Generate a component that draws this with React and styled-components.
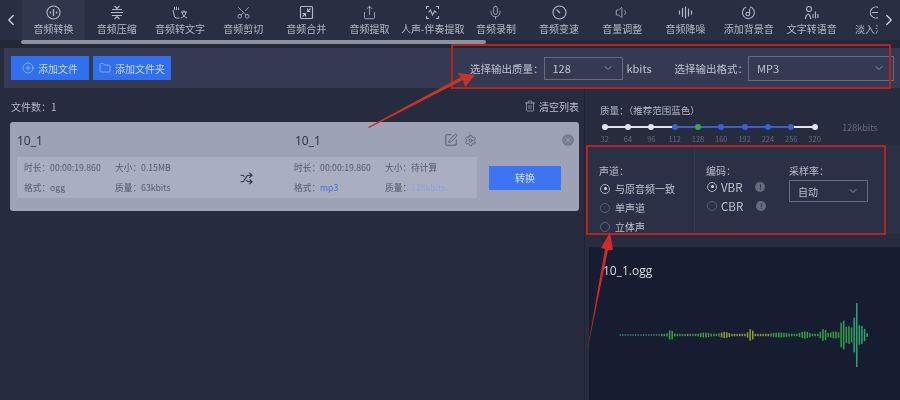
import styled, { createGlobalStyle } from 'styled-components';
import {
  ChevronLeft, ChevronRight, ChevronDown, Scissors, Share, Mic, Volume1,
  CirclePlus, Folder, Trash2, SquarePen, Settings, Shuffle, X,
} from 'lucide-react';

const Global = createGlobalStyle`
  html, body { margin: 0; padding: 0; background: #262c3e; }
  * { box-sizing: border-box; }
  body { font-family: "Noto Sans CJK SC", "Noto Sans", sans-serif; }
`;

const Page = styled.div`
  position: relative;
  width: 900px;
  height: 400px;
  overflow: hidden;
  background: #262c3e;
  display: flex;
  flex-direction: column;
  filter: blur(0.45px);
`;

const Nav = styled.div`
  height: 40px;
  display: flex;
  align-items: stretch;
  background: #292f42;
  flex: none;
`;

const NavArrow = styled.div`
  width: 22px;
  flex: none;
  display: flex;
  align-items: center;
  justify-content: center;
  color: #d8dbe4;
  background: #292f42;
  z-index: 1;
`;

const NavList = styled.div`
  flex: 1;
  display: flex;
  overflow: hidden;
`;

const NavItem = styled.div`
  width: 63.2px;
  flex: none;
  display: flex;
  flex-direction: column;
  align-items: center;
  padding-top: 5px;
  gap: 1px;
  color: #b4b8c6;
  font-size: 10px;
  line-height: 15px;
  white-space: nowrap;
  background: ${({ $active }) => ($active ? '#30374c' : 'transparent')};
  svg { height: 15px; flex: none; }
`;

const ScissorsUp = styled(Scissors)`
  transform: rotate(-90deg);
`;

const ScrollTrack = styled.div`
  height: 8px;
  flex: none;
  padding-left: 21px;
  background: #232839;
`;

const ScrollThumb = styled.div`
  width: 465px;
  height: 4px;
  border-radius: 2px;
  background: #8d91a3;
`;

const Toolbar = styled.div`
  height: 40px;
  flex: none;
  margin-left: 4px;
  padding-left: 7px;
  display: flex;
  align-items: center;
  background: #333a52;
`;

const BlueButton = styled.div`
  width: 78px;
  height: 24px;
  margin-right: 4px;
  display: flex;
  align-items: center;
  justify-content: center;
  gap: 4px;
  background: #3070ee;
  color: #c9d7f6;
  font-size: 10px;
  flex: none;
`;

const OutputControls = styled.div`
  margin-left: auto;
  display: flex;
  align-items: center;
  color: #bfc3cf;
  font-size: 10.5px;
  width: 430px;
  white-space: nowrap;
`;

const UnitLabel = styled.span`
  font-size: 11px;
  margin-right: 23px;
`;

const SelectBox = styled.div`
  width: ${({ $w }) => $w}px;
  height: ${({ $h }) => $h || 23}px;
  flex: none;
  display: flex;
  align-items: center;
  justify-content: space-between;
  padding: 0 8px;
  border: 1px solid #656c80;
  color: #bfc3cf;
  font-size: ${({ $small }) => ($small ? '10px' : '11px')};
  margin: ${({ $m }) => $m || '0'};
  svg { color: #8d93a5; }
`;

const Main = styled.div`
  flex: 1;
  min-height: 0;
  display: flex;
`;

const LeftPanel = styled.div`
  width: 585px;
  flex: none;
  padding: 0 5px 0 10px;
  border-right: 1px solid #1e2333;
`;

const ListHead = styled.div`
  height: 34px;
  display: flex;
  align-items: center;
  justify-content: space-between;
  font-size: 10px;
  color: #b9bcc8;
  padding: 2px 0 0 1px;
`;

const ClearBtn = styled.div`
  display: flex;
  align-items: center;
  gap: 3px;
  font-size: 10px;
  color: #bfc3cf;
`;

const Card = styled.div`
  position: relative;
  width: 569px;
  height: 89px;
  background: #9da2b6;
  border-radius: 3px;
  padding: 4px 7px 0;
`;

const CardTop = styled.div`
  height: 28px;
  margin-bottom: 3px;
  display: flex;
  align-items: center;
  font-family: "Noto Sans", sans-serif;
  font-size: 12px;
  color: #30354a;
`;

const TopName = styled.div`
  width: ${({ $w }) => $w}px;
  flex: none;
`;

const TopIcons = styled.div`
  display: flex;
  align-items: center;
  gap: 6px;
  color: #3c4156;
`;

const CloseDot = styled.div`
  position: absolute;
  top: 12px;
  right: 5px;
  width: 12px;
  height: 12px;
  border-radius: 50%;
  background: #777c90;
  color: #a7abbd;
  display: flex;
  align-items: center;
  justify-content: center;
`;

const CardBody = styled.div`
  display: flex;
  align-items: center;
`;

const InfoBox = styled.div`
  width: 460px;
  height: 41px;
  flex: none;
  background: #a9aec1;
  display: flex;
  align-items: center;
  padding-left: 7px;
`;

const InfoGrid = styled.div`
  width: 180px;
  flex: none;
  display: grid;
  grid-template-columns: 91px 1fr;
  row-gap: 4px;
  padding-top: 1px;
  font-size: 8.7px;
  line-height: 16px;
  color: #555a6d;
  white-space: nowrap;
`;

const Highlight = styled.span`
  color: ${({ $pale }) => ($pale ? '#8ea2de' : '#4c70d8')};
`;

const ShuffleSlot = styled.div`
  width: 90px;
  flex: none;
  display: flex;
  justify-content: center;
  color: #2b3044;
  padding: 1px 6px 0 0;
`;

const ConvertBtn = styled.div`
  width: 72px;
  height: 24px;
  margin-left: 12px;
  background: #3c74f4;
  color: #d7e2fb;
  font-size: 10px;
  display: flex;
  align-items: center;
  justify-content: center;
`;

const RightPanel = styled.div`
  flex: 1;
  min-width: 0;
  display: flex;
  flex-direction: column;
  margin-left: 4px;
`;

const Quality = styled.div`
  height: 58px;
  flex: none;
  padding: 15px 0 0 11px;
  color: #b5b9c6;
  font-size: 9.5px;
`;

const QualityLabel = styled.div`
  line-height: 15px;
`;

const SliderRow = styled.div`
  display: flex;
  margin-top: 4px;
`;

const Ticks = styled.div`
  position: relative;
  display: flex;
  width: 233.3px;
  margin-left: -7px;
`;

const TrackLine = styled.div`
  position: absolute;
  top: 4px;
  height: 2px;
  left: ${({ $l }) => $l}px;
  width: ${({ $w }) => $w}px;
  background: ${({ $blue }) => ($blue ? '#3a5fc9' : '#e2e4ea')};
`;

const Tick = styled.div`
  position: relative;
  width: 23.33px;
  flex: none;
  display: flex;
  flex-direction: column;
  align-items: center;
  gap: 4px;
  font-size: 7.5px;
  line-height: 10px;
  color: #666c80;
`;

const Dot = styled.div`
  width: 6px;
  height: 6px;
  margin-top: 2px;
  border-radius: 50%;
  background: ${({ $c }) => $c};
`;

const QualityValue = styled.div`
  margin-left: 16px;
  font-size: 9px;
  color: #666c80;
  line-height: 11px;
`;

const SettingsRow = styled.div`
  height: 88px;
  flex: none;
  display: flex;
  background: #2a3046;
  font-size: 10px;
  color: #c0c4d0;
  margin-bottom: 13px;
  overflow: hidden;
`;

const SettingCol = styled.div`
  width: ${({ $w }) => $w}px;
  flex: none;
  padding: 17px 0 0 ${({ $left }) => $left}px;
  border-right: ${({ $line }) => ($line ? '1px solid #333a50' : 'none')};
`;

const ColTitle = styled.div`
  font-size: 10px;
  line-height: 16px;
  margin-bottom: ${({ $tight }) => ($tight ? '-2px' : '0')};
  color: #b9bdca;
`;

const RadioRow = styled.div`
  height: 19px;
  display: flex;
  align-items: center;
  gap: ${({ $latin }) => ($latin ? '4px' : '5px')};
  font-size: ${({ $latin }) => ($latin ? '11.5px' : '10px')};
  white-space: nowrap;
`;

const Radio = styled.div`
  width: 10px;
  height: 10px;
  margin-left: 1px;
  flex: none;
  border-radius: 50%;
  border: 1px solid ${({ $on }) => ($on ? '#aeb2c0' : '#596075')};
  display: flex;
  align-items: center;
  justify-content: center;
  &::after {
    content: '';
    width: 3px;
    height: 3px;
    border-radius: 50%;
    background: ${({ $on }) => ($on ? '#d8dbe3' : 'transparent')};
  }
`;

const InfoDot = styled.div`
  width: 10px;
  height: 10px;
  margin-left: 9px;
  border-radius: 50%;
  background: #666c80;
  color: #2a3046;
  font-size: 7px;
  font-weight: 700;
  line-height: 10px;
  text-align: center;
`;

const WavePanel = styled.div`
  flex: 1;
  min-height: 0;
  background: #171d30;
  padding: 16px 0 0 14px;
`;

const WaveName = styled.div`
  font-family: "Open Sans", "Noto Sans", sans-serif;
  font-size: 12px;
  line-height: 16px;
  color: #d9dbe2;
`;

const WaveSvg = styled.svg`
  display: block;
  margin: 21px 0 0 16px;
`;

const Overlay = styled.svg`
  position: absolute;
  left: 0;
  top: 0;
  pointer-events: none;
`;

function NavSvg({ children, sw = 1.1, w = 15 }) {
  return (
    <svg width={w} height="15" viewBox={`0 0 ${w} 15`} fill="none" stroke="currentColor" strokeWidth={sw}>
      {children}
    </svg>
  );
}

const iconProps = { size: 15, strokeWidth: 1.3 };

const tools = [
  {
    name: '音频转换',
    active: true,
    icon: (
      <NavSvg>
        <circle cx="7.5" cy="7.5" r="6.5" />
        <path d="M4.5 6.5v2M7.5 4v7M10.5 6.5v2" strokeWidth="1.3" />
      </NavSvg>
    ),
  },
  {
    name: '音频压缩',
    icon: (
      <NavSvg w={16}>
        <path d="M2 7.5h12M3 4.5h10M3 10.5h10M5.5 1L8 3.5 10.5 1M5.5 14L8 11.5l2.5 2.5" />
      </NavSvg>
    ),
  },
  {
    name: '音频转文字',
    icon: (
      <NavSvg w={16} sw={1}>
        <path d="M1 5l1.5 6.5c.5 1.5 3 2 5 1.5M2.5 5V2M4.5 5V1.5M6.5 5V2.5M9 7h6M12 5v2M10 7c.5 3 2.5 5 5 6M14 7c-.5 3-2.5 5-5 6" />
      </NavSvg>
    ),
  },
  { name: '音频剪切', icon: <ScissorsUp {...iconProps} /> },
  {
    name: '音频合并',
    icon: (
      <NavSvg>
        <rect x="1.5" y="1.5" width="12" height="12" rx="1" />
        <path d="M3.5 11.5l3-3M3.5 8.5h3v3M11.5 3.5l-3 3M8.5 3.5v3h3" />
      </NavSvg>
    ),
  },
  { name: '音频提取', icon: <Share {...iconProps} /> },
  {
    name: '人声-伴奏提取',
    icon: (
      <NavSvg>
        <path d="M1.5 4V1.5H4M11 1.5h2.5V4M1.5 11v2.5H4M11 13.5h2.5V11" />
        <path d="M3.5 7.5l2-2.5 2 5 2-4 2 1.5" />
      </NavSvg>
    ),
  },
  { name: '音频录制', icon: <Mic {...iconProps} /> },
  {
    name: '音频变速',
    icon: (
      <NavSvg>
        <circle cx="7.5" cy="7.5" r="6.5" />
        <path d="M4.5 4.5L8 8" strokeWidth="1.3" />
      </NavSvg>
    ),
  },
  { name: '音量调整', icon: <Volume1 {...iconProps} /> },
  {
    name: '音频降噪',
    icon: (
      <NavSvg sw={1.2}>
        <path d="M1.5 5.5v4M4.5 3v9M7.5 1.5v12M10.5 3.5v8M13.5 5.5v4" />
      </NavSvg>
    ),
  },
  {
    name: '添加背景音',
    icon: (
      <NavSvg>
        <path d="M9 1.8a6 6 0 1 1-4 .3" />
        <circle cx="6.8" cy="9" r="1.8" />
        <path d="M8.6 9V3.5" />
      </NavSvg>
    ),
  },
  {
    name: '文字转语音',
    icon: (
      <NavSvg w={16}>
        <circle cx="5" cy="4" r="2.5" />
        <path d="M1.5 14c0-3 1.5-5 3.5-5M5 9l2 5M9 9v4M11.5 6.5v7M14 9v4" />
      </NavSvg>
    ),
  },
  {
    name: '淡入淡出',
    icon: (
      <NavSvg>
        <path d="M11 3a5.5 5.5 0 1 0 0 9M4 7.5h6M12 5.5v4" />
      </NavSvg>
    ),
  },
];

const rates = [
  ['32', '#e2e4ea'], ['64', '#e2e4ea'], ['96', '#e2e4ea'], ['112', '#3a63d2'], ['128', '#3fa53f'],
  ['160', '#3a63d2'], ['192', '#3a63d2'], ['224', '#3a63d2'], ['256', '#3a63d2'], ['320', '#e2e4ea'],
];

// waveform bumps: [x, half height, spread]
const peaks = [
  [51, 5, 2.5], [85, 2.5, 6], [105, 3, 5], [131, 6, 2.5], [160, 2.5, 9], [185, 3.5, 5],
  [204, 6, 3], [215, 3.5, 5], [223, 16, 2.2], [228, 11, 1.8], [237, 32, 0.9], [236, 20, 3],
  [243, 10, 1.8], [246, 5, 1],
];

function waveHeight(x) {
  let h = x < 40 ? 0.6 : 1.2;
  for (const [px, ph, pw] of peaks) {
    h = Math.max(h, ph * Math.exp(-((x - px) ** 2) / (2 * pw * pw)));
  }
  return h;
}

function waveColor(x) {
  if (x < 40) return '#3d9a88';
  if (x < 100) return '#3f9c42';
  if (x < 150) return '#8f9f38';
  if (x < 215) return '#37a03e';
  return x > 232 ? '#2aa572' : '#2ba04e';
}

function Waveform() {
  const bars = [];
  for (let k = 0; k < 96; k++) bars.push(0.4 + k * 2.6);
  return (
    <WaveSvg width="250" height="70" viewBox="0 0 250 70">
      {bars.map((x) => {
        const h = waveHeight(x);
        return <rect key={x} x={x} y={35 - h} width="1.5" height={h * 2} fill={waveColor(x)} />;
      })}
    </WaveSvg>
  );
}

export default function App() {
  return (
    <Page>
      <Global />
      <Nav>
        <NavArrow><ChevronLeft size={18} strokeWidth={1.6} /></NavArrow>
        <NavList>
          {tools.map((t) => (
            <NavItem key={t.name} $active={t.active}>
              {t.icon}
              <span>{t.name}</span>
            </NavItem>
          ))}
        </NavList>
        <NavArrow><ChevronRight size={18} strokeWidth={1.6} /></NavArrow>
      </Nav>
      <ScrollTrack><ScrollThumb /></ScrollTrack>
      <Toolbar>
        <BlueButton><CirclePlus size={12} strokeWidth={1.2} />添加文件</BlueButton>
        <BlueButton><Folder size={12} strokeWidth={1.2} />添加文件夹</BlueButton>
        <OutputControls>
          <span>选择输出质量：</span>
          <SelectBox $w={79} $m="0 4px 0 0"><span>128</span><ChevronDown size={12} /></SelectBox>
          <UnitLabel>kbits</UnitLabel>
          <span>选择输出格式：</span>
          <SelectBox $w={146} $h={25}><span>MP3</span><ChevronDown size={12} /></SelectBox>
        </OutputControls>
      </Toolbar>
      <Main>
        <LeftPanel>
          <ListHead>
            <span>文件数：1</span>
            <ClearBtn><Trash2 size={12} strokeWidth={1.2} />清空列表</ClearBtn>
          </ListHead>
          <Card>
            <CardTop>
              <TopName $w={278}>10_1</TopName>
              <TopName $w={149}>10_1</TopName>
              <TopIcons>
                <SquarePen size={14} strokeWidth={1.2} />
                <Settings size={13} strokeWidth={1.2} />
              </TopIcons>
            </CardTop>
            <CloseDot><X size={8} strokeWidth={2.5} /></CloseDot>
            <CardBody>
              <InfoBox>
                <InfoGrid>
                  <span>时长：00:00:19.860</span><span>大小：0.15MB</span>
                  <span>格式：ogg</span><span>质量：63kbits</span>
                </InfoGrid>
                <ShuffleSlot><Shuffle size={13} strokeWidth={2} /></ShuffleSlot>
                <InfoGrid>
                  <span>时长：00:00:19.860</span><span>大小：待计算</span>
                  <span>格式：<Highlight>mp3</Highlight></span>
                  <span>质量：<Highlight $pale>128kbits</Highlight></span>
                </InfoGrid>
              </InfoBox>
              <ConvertBtn>转换</ConvertBtn>
            </CardBody>
          </Card>
        </LeftPanel>
        <RightPanel>
          <Quality>
            <QualityLabel>质量：（推荐范围蓝色）</QualityLabel>
            <SliderRow>
              <Ticks>
                <TrackLine $l={12} $w={210} />
                <TrackLine $blue $l={82} $w={117} />
                {rates.map(([label, color]) => (
                  <Tick key={label}>
                    <Dot $c={color} />
                    {label}
                  </Tick>
                ))}
              </Ticks>
              <QualityValue>128kbits</QualityValue>
            </SliderRow>
          </Quality>
          <SettingsRow>
            <SettingCol $w={106} $left={10} $line>
              <ColTitle>声道：</ColTitle>
              <RadioRow><Radio $on />与原音频一致</RadioRow>
              <RadioRow><Radio />单声道</RadioRow>
              <RadioRow><Radio />立体声</RadioRow>
            </SettingCol>
            <SettingCol $w={94} $left={11}>
              <ColTitle $tight>编码：</ColTitle>
              <RadioRow $latin><Radio $on />VBR<InfoDot>!</InfoDot></RadioRow>
              <RadioRow $latin><Radio />CBR<InfoDot>!</InfoDot></RadioRow>
            </SettingCol>
            <SettingCol $w={100} $left={0}>
              <ColTitle>采样率：</ColTitle>
              <SelectBox $w={79} $h={22} $small $m="1px 0 0 0"><span>自动</span><ChevronDown size={12} /></SelectBox>
            </SettingCol>
          </SettingsRow>
          <WavePanel>
            <WaveName>10_1.ogg</WaveName>
            <Waveform />
          </WavePanel>
        </RightPanel>
      </Main>
      <Overlay width="900" height="400" viewBox="0 0 900 400">
        <rect x="452" y="45" width="438" height="43" fill="none" stroke="#b5241f" strokeWidth="2" />
        <rect x="587" y="146" width="298" height="88" fill="none" stroke="#b5241f" strokeWidth="2" />
        <polygon points="368,127 461,77 457,73 475,75 465,87 463,80 369,128" fill="#c8332c" />
        <polygon points="587,352 605,249 601,248 610,232 613,250 608,250" fill="#d02a2a" />
      </Overlay>
    </Page>
  );
}
